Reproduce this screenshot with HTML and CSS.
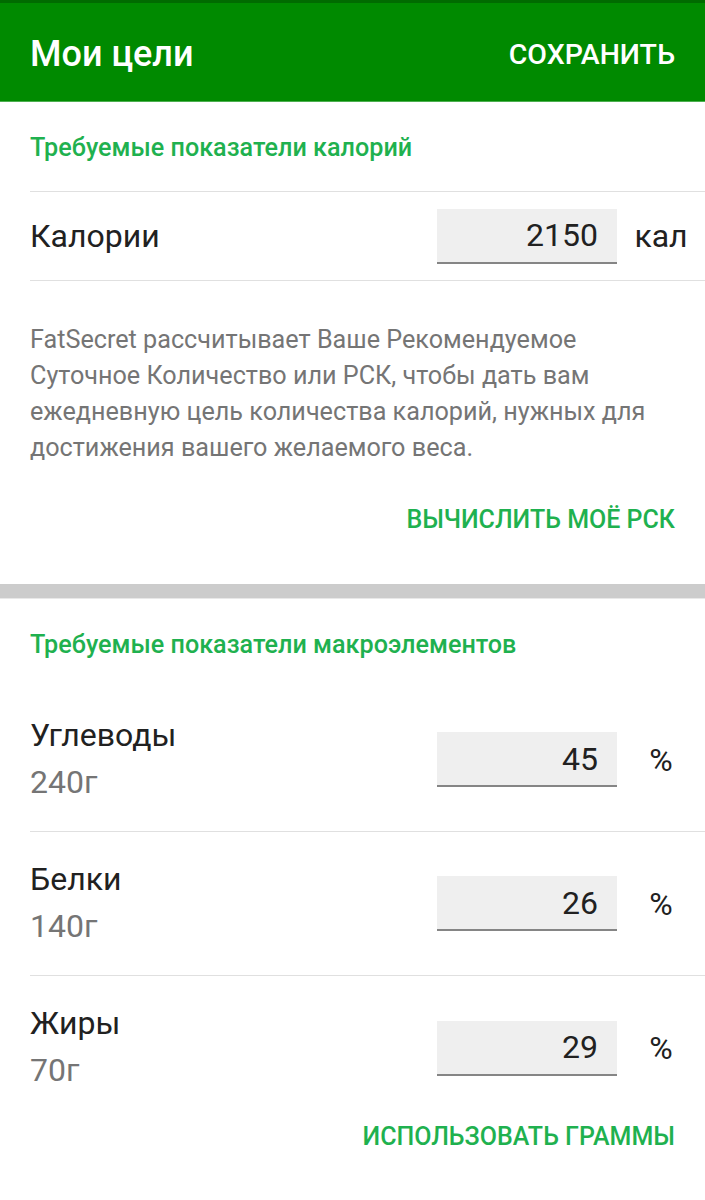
FILE: index.html
```html
<!DOCTYPE html>
<html lang="ru">
<head>
<meta charset="utf-8">
<link rel="stylesheet" href="styles.css">
</head>
<body>
<header class="appbar">
  <h1 class="appbar-title">Мои цели</h1>
  <span class="appbar-action">СОХРАНИТЬ</span>
</header>

<section class="card">
  <h2 class="section-title">Требуемые показатели калорий</h2>
  <div class="row row-cal">
    <div class="label">Калории</div>
    <div class="field"><span class="field-value">2150</span></div>
    <div class="unit">кал</div>
  </div>
  <p class="desc">FatSecret рассчитывает Ваше Рекомендуемое Суточное Количество или РСК, чтобы дать вам ежедневную цель количества калорий, нужных для достижения вашего желаемого веса.</p>
  <div class="btn-row"><span class="text-btn">ВЫЧИСЛИТЬ МОЁ РСК</span></div>
</section>

<div class="band"></div>

<section class="card">
  <h2 class="section-title section-title-2">Требуемые показатели макроэлементов</h2>
  <div class="row row-macro">
    <div class="label-group">
      <div class="label">Углеводы</div>
      <div class="sub">240г</div>
    </div>
    <div class="field"><span class="field-value">45</span></div>
    <div class="unit">%</div>
  </div>
  <div class="row row-macro">
    <div class="label-group">
      <div class="label">Белки</div>
      <div class="sub">140г</div>
    </div>
    <div class="field"><span class="field-value">26</span></div>
    <div class="unit">%</div>
  </div>
  <div class="row row-macro row-last">
    <div class="label-group">
      <div class="label">Жиры</div>
      <div class="sub">70г</div>
    </div>
    <div class="field"><span class="field-value">29</span></div>
    <div class="unit">%</div>
  </div>
  <div class="btn-row btn-row-2"><span class="text-btn">ИСПОЛЬЗОВАТЬ ГРАММЫ</span></div>
</section>
</body>
</html>
```

FILE: styles.css
```css
* { box-sizing: border-box; }
html, body { margin: 0; padding: 0; }
body {
  background: #ffffff;
  font-family: Roboto, "Noto Sans", sans-serif;
  color: #212121;
  width: 705px;
}
.appbar {
  height: 102px;
  background: #008a00;
  border-top: 3px solid #006b00;
  border-bottom: 1px solid #4caf50;
  display: flex;
  align-items: center;
  justify-content: space-between;
  padding: 4px 30px 0 30px;
}
.appbar-title {
  margin: 0;
  font-size: 36px;
  font-weight: 500;
  color: #ffffff;
}
.appbar-action {
  font-size: 28.5px;
  font-weight: 500;
  color: #ffffff;
}
.card { padding-left: 30px; }
.section-title {
  margin: 0;
  height: 90px;
  display: flex;
  align-items: center;
  padding-top: 1px;
  font-size: 25.2px;
  font-weight: 500;
  color: #1fb14f;
  border-bottom: 1px solid #e0e0e0;
}
.section-title-2 {
  border-bottom: none;
  height: 89px;
}
.row {
  display: flex;
  align-items: center;
}
.row-cal {
  height: 89px;
  border-bottom: 1px solid #e0e0e0;
}
.row-macro {
  height: 144px;
  border-bottom: 1px solid #e0e0e0;
}
.row-last { border-bottom: none; }
.label-group { flex: 1; padding-bottom: 3px; }
.row-cal .label { flex: 1; }
.label {
  font-size: 32px;
  color: #212121;
  line-height: 38px;
}
.sub {
  font-size: 32px;
  color: #757575;
  line-height: 38px;
  margin-top: 9px;
}
.field {
  width: 180px;
  height: 55px;
  background: #efefef;
  border-bottom: 2px solid #858585;
  display: flex;
  align-items: center;
  justify-content: flex-end;
  padding-right: 19px;
}
.field-value {
  font-size: 32px;
  color: #212121;
}
.unit {
  width: 88px;
  text-align: center;
  font-size: 32px;
  color: #212121;
}
.desc {
  margin: 41px 30px 0 0;
  font-size: 25.2px;
  line-height: 36px;
  color: #757575;
}
.btn-row {
  display: flex;
  justify-content: flex-end;
  padding-right: 30px;
  height: 118px;
  padding-top: 39px;
}
.text-btn {
  font-size: 25px;
  font-weight: 500;
  color: #1fb14f;
  line-height: 30px;
}
.band {
  height: 15px;
  background: #cccccc;
  border-bottom: 1px solid #e8e8e8;
}
.btn-row-2 {
  padding-top: 2px;
}
```
